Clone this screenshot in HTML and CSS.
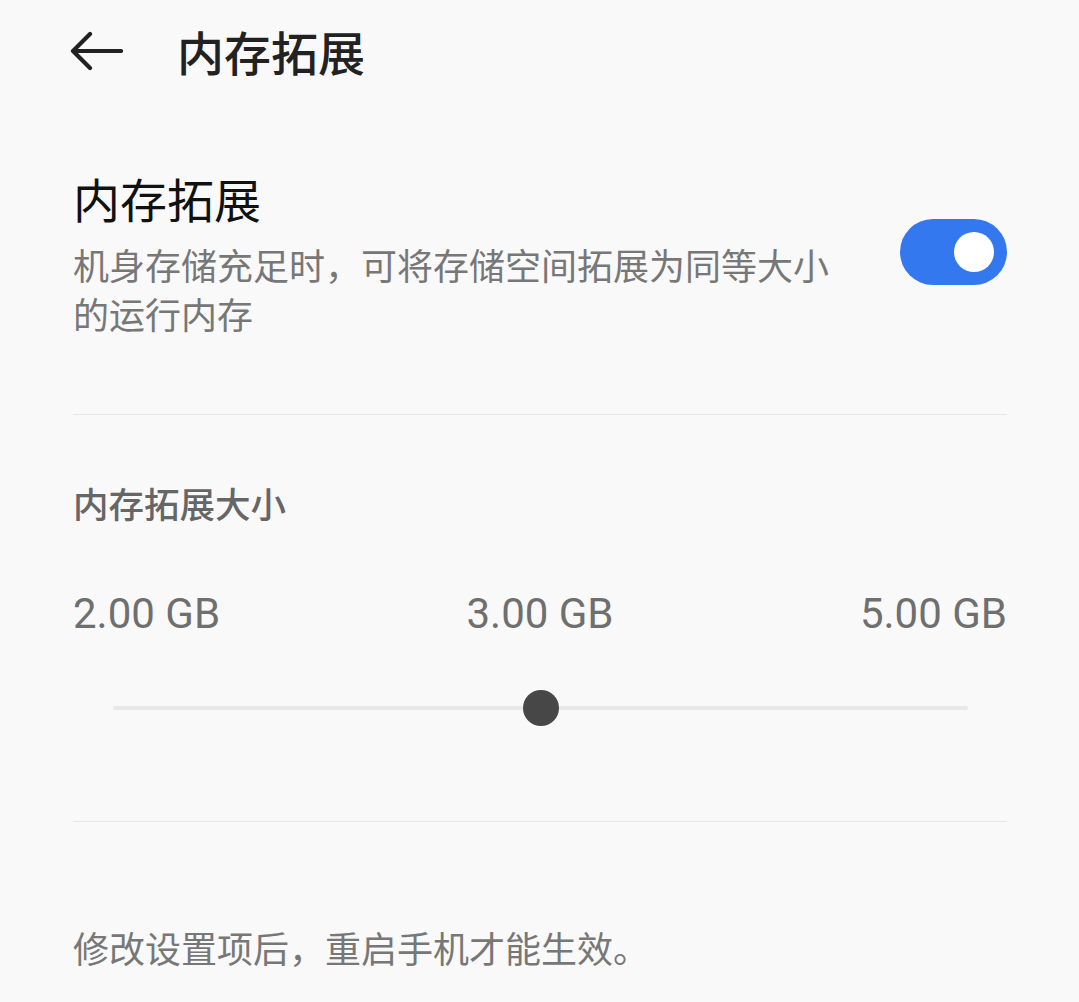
FILE: index.html
```html
<!DOCTYPE html>
<html lang="zh-CN">
<head>
    <meta charset="UTF-8">
    <meta name="viewport" content="width=device-width, initial-scale=1.0">
    <title>内存拓展</title>
    <link rel="stylesheet" href="styles.css">
</head>
<body>
    <header class="topbar">
        <svg class="back" width="54" height="40" viewBox="0 0 54 40">
            <path d="M52 20 H4 M21 3 L4 20 L21 37" fill="none" stroke="#222" stroke-width="4.2" stroke-linecap="round" stroke-linejoin="round"/>
        </svg>
        <h1 class="topbar-title">内存拓展</h1>
    </header>

    <main class="content">
        <section class="switch-row">
            <div class="switch-text">
                <h2 class="switch-title">内存拓展</h2>
                <p class="switch-desc">机身存储充足时，可将存储空间拓展为同等大小<br>的运行内存</p>
            </div>
            <div class="toggle">
                <div class="toggle-knob"></div>
            </div>
        </section>

        <hr class="divider">

        <section class="size-block">
            <h3 class="size-title">内存拓展大小</h3>
            <div class="size-values">
                <span>2.00 GB</span>
                <span>3.00 GB</span>
                <span>5.00 GB</span>
            </div>
            <div class="slider">
                <div class="slider-track"></div>
                <div class="slider-thumb" style="left: 50%"></div>
            </div>
        </section>

        <hr class="divider">

        <p class="note">修改设置项后，重启手机才能生效。</p>
    </main>
</body>
</html>
```

FILE: styles.css
```css
body {
    margin: 0;
    padding: 0;
    background-color: #f9f9f9;
    font-family: "Noto Sans CJK SC", "Noto Sans", sans-serif;
    color: #222;
}

.topbar {
    display: flex;
    align-items: center;
    height: 102px;
    padding-left: 69px;
}

.back {
    display: block;
    margin-right: 54px;
}

.topbar-title {
    margin: 0;
    font-size: 47px;
    font-weight: 500;
    line-height: 102px;
    color: #222;
}

.content {
    padding: 0 72px 0 73px;
}

.switch-row {
    display: flex;
    align-items: center;
    justify-content: space-between;
    padding: 64px 0 76px;
}

.switch-title {
    margin: 0;
    font-size: 47px;
    font-weight: 400;
    line-height: 64px;
    color: #111;
}

.switch-desc {
    margin: 10px 0 0;
    font-size: 36px;
    line-height: 49px;
    color: #777;
}

.toggle {
    position: relative;
    width: 107px;
    height: 66px;
    border-radius: 33px;
    background-color: #3478f0;
    flex-shrink: 0;
}

.toggle-knob {
    position: absolute;
    right: 13px;
    top: 13px;
    width: 40px;
    height: 40px;
    border-radius: 50%;
    background-color: #fff;
}

.divider {
    margin: 0;
    border: none;
    border-top: 1px solid #e6e6e6;
}

.size-block {
    padding: 63px 0 83px;
}

.size-title {
    margin: 0;
    font-size: 35.5px;
    font-weight: 500;
    line-height: 50px;
    color: #666;
}

.size-values {
    display: flex;
    justify-content: space-between;
    margin-top: 61px;
    font-family: Roboto, "Noto Sans", sans-serif;
    font-size: 42px;
    line-height: 50px;
    color: #6f6f6f;
}

.slider {
    position: relative;
    height: 60px;
    margin: 39px 39px 0 40px;
}

.slider-track {
    position: absolute;
    left: 0;
    right: 0;
    top: 28px;
    height: 4px;
    border-radius: 2px;
    background-color: #e8e8e8;
}

.slider-thumb {
    position: absolute;
    top: 12px;
    width: 36px;
    height: 36px;
    margin-left: -18px;
    border-radius: 50%;
    background-color: #474747;
}

.note {
    margin: 0;
    padding-top: 100px;
    font-size: 36px;
    line-height: 50px;
    color: #777;
}
```
